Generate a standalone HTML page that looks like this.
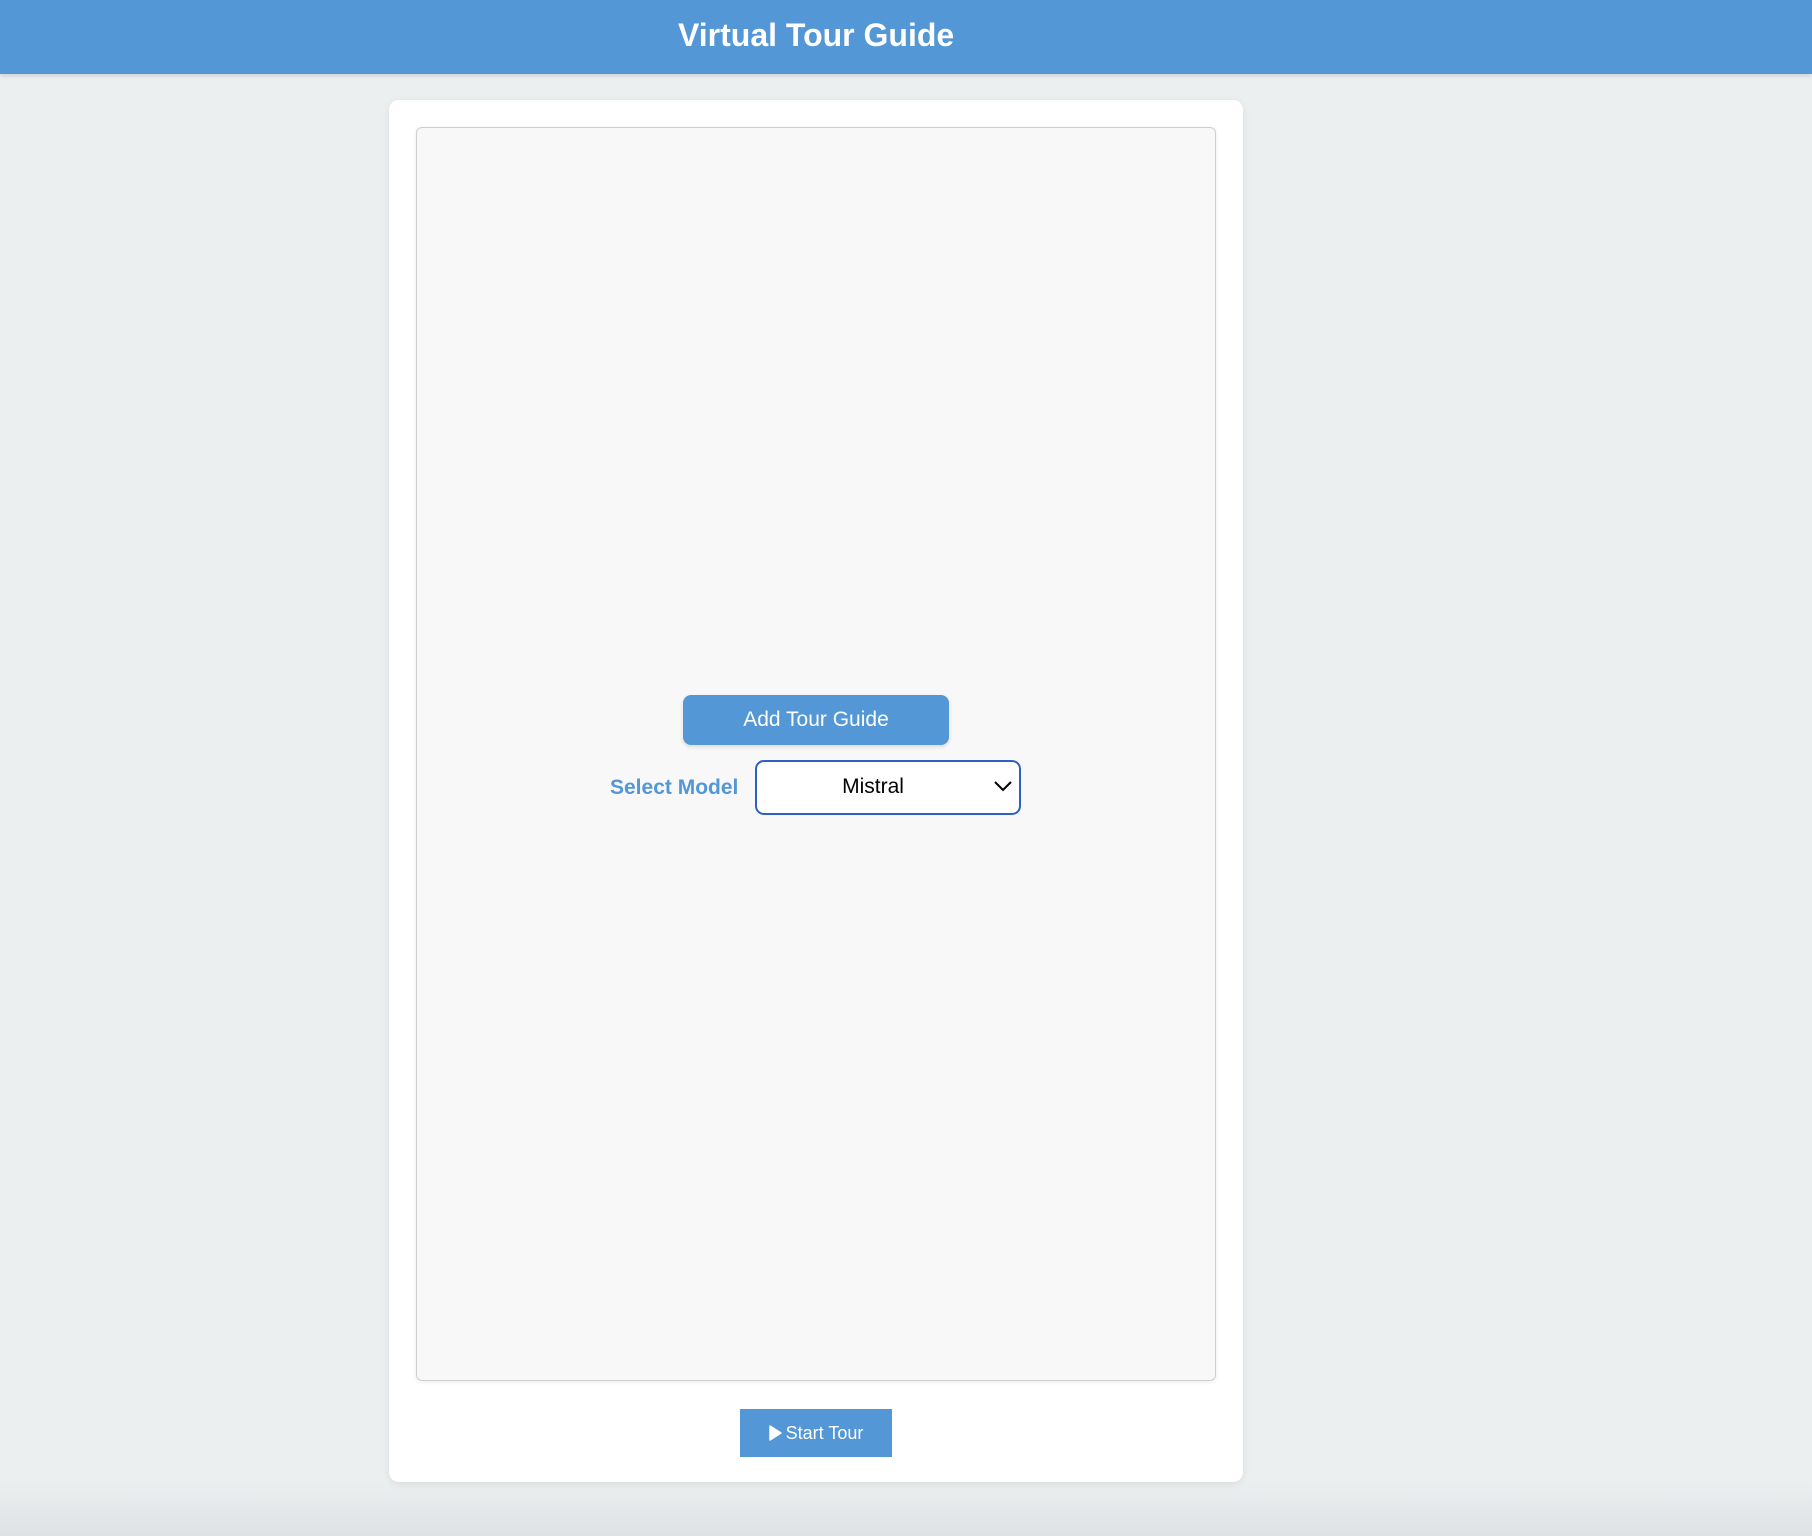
<!DOCTYPE html>
<html><head><meta charset="utf-8">
<style>
*{box-sizing:border-box;margin:0;padding:0}
html,body{width:1812px;height:1536px;overflow:hidden}
body{background:linear-gradient(to bottom,#ebeff0 0,#ebeff0 1480px,#dfe2e4 1536px);font-family:"Liberation Sans",sans-serif;position:relative}
.hdr{position:absolute;left:0;top:0;width:1812px;height:74px;background:#5397d6;box-shadow:0 2px 4px rgba(0,0,0,.12);color:#fff;font-weight:bold;font-size:32px;text-align:center;line-height:70px;}
.hdr span{position:absolute;left:678px;top:0;width:276px;text-align:center;white-space:nowrap}
.card{position:absolute;left:389px;top:100px;width:854px;height:1382px;background:#fff;border-radius:10px;box-shadow:0 2px 8px rgba(0,0,0,.08)}
.panel{position:absolute;left:416px;top:127px;width:800px;height:1254px;background:#f8f8f8;border:1px solid #cfcfcf;border-radius:6px;box-shadow:0 1px 4px rgba(0,0,0,.08)}
.add{position:absolute;left:683px;top:695px;width:266px;height:50px;background:#5397d6;border-radius:8px;color:#fff;font-size:21px;text-align:center;line-height:50px;box-shadow:0 2px 4px rgba(0,0,0,.12)}
.lbl{position:absolute;left:610px;top:775px;color:#5397d6;font-weight:bold;font-size:21px;line-height:26px;white-space:nowrap}
.sel{position:absolute;left:755px;top:760px;width:266px;height:55px;background:#fff;border:2.5px solid #2f60c4;border-radius:9px;font-size:21px;line-height:50px;text-align:center;color:#000;padding-right:30px}
.sel svg{position:absolute;right:6px;top:18px}
.start{position:absolute;left:740px;top:1409px;width:152px;height:48px;background:#5397d6;color:#fff;font-size:18px;line-height:48px;text-align:center}
.start svg{vertical-align:-2px;margin-right:4px}
</style></head><body>
<div class="hdr"><span>Virtual Tour Guide</span></div>
<div class="card"></div>
<div class="panel"></div>
<div class="add">Add Tour Guide</div>
<div class="lbl">Select Model</div>
<div class="sel">Mistral<svg width="20" height="12" viewBox="0 0 20 12"><path d="M2 2 L10 10 L18 2" fill="none" stroke="#000" stroke-width="2"/></svg></div>
<div class="start"><svg width="13" height="16" viewBox="0 0 13 16"><path d="M1 1 L12 8 L1 15 Z" fill="#fff" stroke="#fff" stroke-linejoin="round" stroke-width="1.5"/></svg>Start Tour</div>
</body></html>
